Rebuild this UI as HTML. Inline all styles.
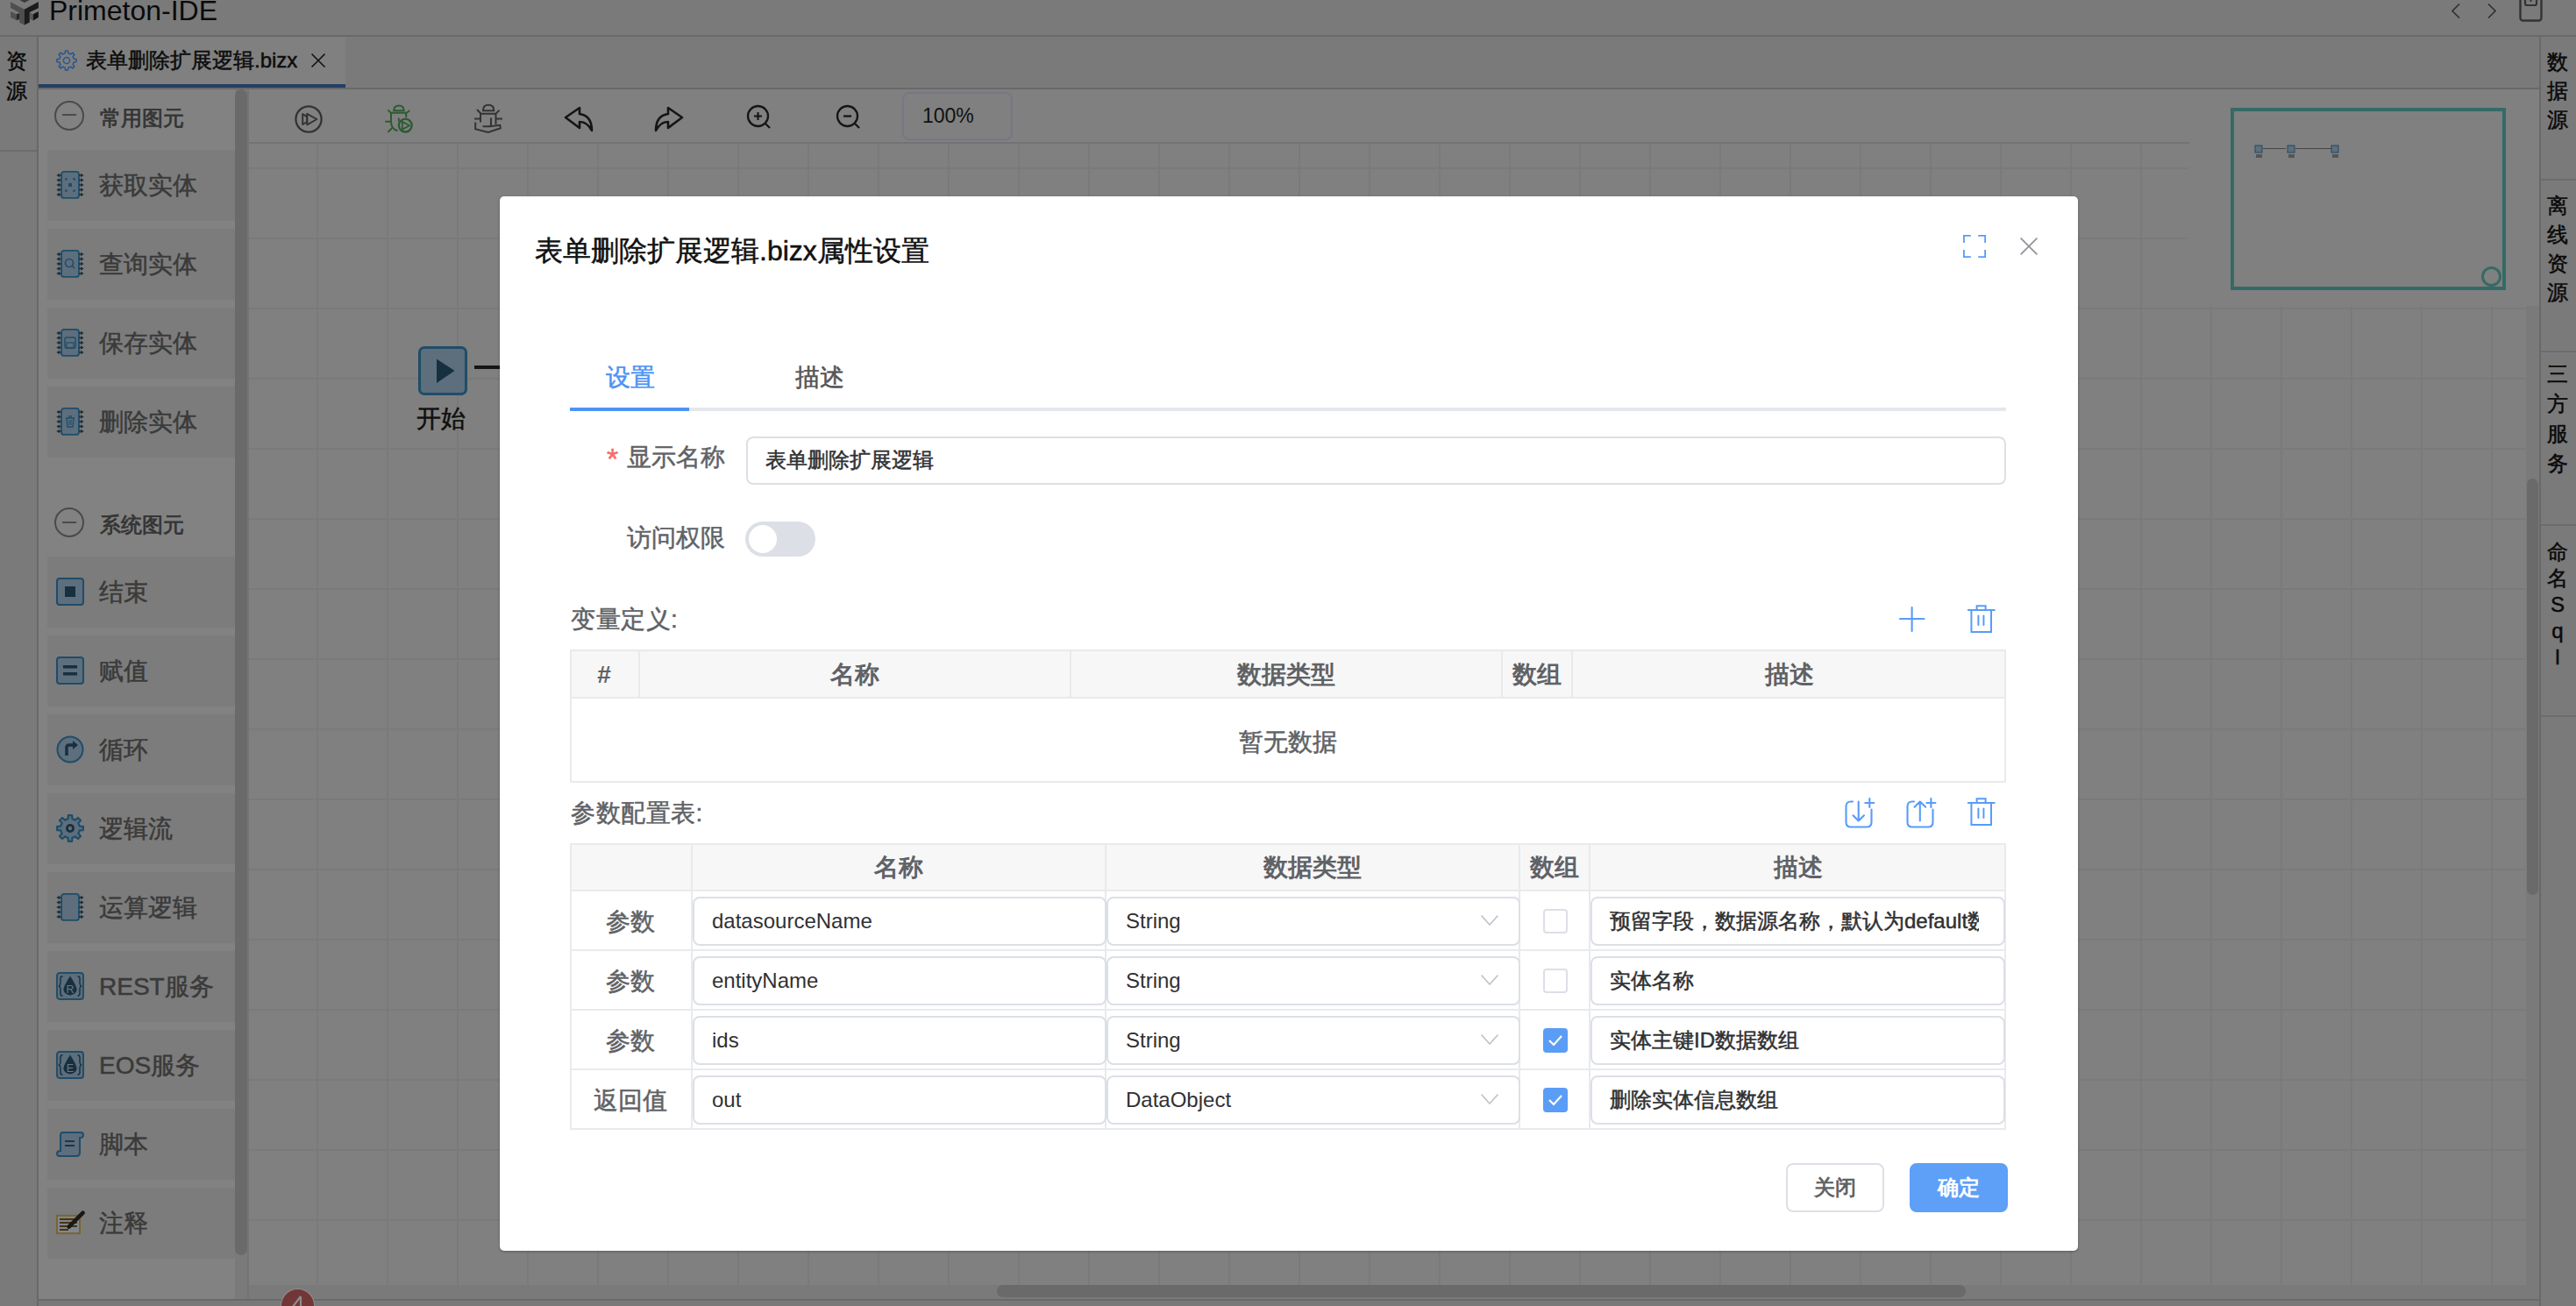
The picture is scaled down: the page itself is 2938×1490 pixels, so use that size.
<!DOCTYPE html>
<html><head><meta charset="utf-8">
<style>
*{box-sizing:border-box;margin:0;padding:0}
html,body{width:2938px;height:1490px;overflow:hidden;background:#808080;font-family:"Liberation Sans",sans-serif;position:relative}
.a{position:absolute}
.t{position:absolute;white-space:nowrap;line-height:1;-webkit-text-stroke:0.5px currentColor}
.v{position:absolute;white-space:normal;line-height:1;color:#0a0a0a;-webkit-text-stroke:0.5px currentColor}
.ns{-webkit-text-stroke:0}
svg{position:absolute;overflow:visible}
</style></head><body>
<!-- title bar -->
<div class="a" style="left:0;top:0;width:2938px;height:40px;background:#7a7a7a"></div>
<div class="a" style="left:0;top:40px;width:2938px;height:2px;background:#696969"></div>
<svg style="left:0;top:0" width="50" height="35" viewBox="0 0 50 35">
  <polygon points="22.4,0 27.8,2.9 33.7,0" fill="#3a3a3a"/>
  <polygon points="12.1,2.3 27.8,10.7 27.8,28.5 22.1,25.5 22.1,14.5 12.1,9.1" fill="#4f4f4f"/>
  <polygon points="27.8,10.7 43.9,2 43.9,9.2 33.8,13.9 33.8,25.5 27.8,28.5" fill="#1c1c1c"/>
  <polygon points="12.1,13.1 18.9,16.3 18.9,23.3 12.1,19.8" fill="#505050"/>
  <polygon points="18.9,16.3 22.1,14.9 22.1,21.7 18.9,23.3" fill="#262626"/>
  <polygon points="33.8,14.3 37.8,16.3 37.8,23.6 33.8,21.8" fill="#5a5a5a"/>
  <polygon points="37.8,16.3 43.9,13.1 43.9,19.8 37.8,23.6" fill="#141414"/>
</svg>
<div class="t ns" style="left:56px;top:-4px;font-size:32px;color:#0a0a0a">Primeton-IDE</div>
<svg style="left:2796px;top:4px" width="10" height="17" viewBox="0 0 10 17"><path d="M9 0.5 L1 8.5 L9 16.5" fill="none" stroke="#2e2e2e" stroke-width="1.6"/></svg>
<svg style="left:2837px;top:4px" width="10" height="17" viewBox="0 0 10 17"><path d="M1 0.5 L9 8.5 L1 16.5" fill="none" stroke="#2e2e2e" stroke-width="1.6"/></svg>
<svg style="left:2873px;top:-6px" width="27" height="31" viewBox="0 0 27 31"><rect x="1.5" y="1.5" width="24" height="28" rx="3" fill="none" stroke="#333" stroke-width="2.4"/><path d="M7 1.5 V10 Q7 12 9 12 H18 Q20 12 20 10 V1.5" fill="none" stroke="#333" stroke-width="2.2"/><line x1="13.5" y1="4" x2="13.5" y2="8" stroke="#333" stroke-width="2"/></svg>
<!-- left strip -->
<div class="a" style="left:0;top:42px;width:42px;height:1448px;background:#7a7a7a"></div>
<div class="a" style="left:42px;top:42px;width:2px;height:1448px;background:#686868"></div>
<div class="a" style="left:0;top:171px;width:42px;height:2px;background:#6c6c6c"></div>
<div class="v" style="left:7px;top:53px;font-size:24px;line-height:34px;width:26px">资<br>源</div>
<!-- right strip -->
<div class="a" style="left:2896px;top:42px;width:2px;height:1448px;background:#686868"></div>
<div class="a" style="left:2898px;top:42px;width:40px;height:1448px;background:#7a7a7a"></div>
<div class="a" style="left:2898px;top:204px;width:40px;height:2px;background:#6c6c6c"></div>
<div class="a" style="left:2898px;top:400px;width:40px;height:2px;background:#6c6c6c"></div>
<div class="a" style="left:2898px;top:598px;width:40px;height:2px;background:#6c6c6c"></div>
<div class="a" style="left:2898px;top:816px;width:40px;height:2px;background:#6c6c6c"></div>
<div class="v" style="left:2905px;top:54px;font-size:24px;line-height:33px;width:26px">数<br>据<br>源</div>
<div class="v" style="left:2905px;top:218px;font-size:24px;line-height:33px;width:26px">离<br>线<br>资<br>源</div>
<div class="v" style="left:2905px;top:410px;font-size:24px;line-height:34px;width:26px">三<br>方<br>服<br>务</div>
<div class="v" style="left:2904px;top:615px;font-size:24px;line-height:30px;width:26px;text-align:center">命<br>名<br>S<br>q<br>l</div>
<!-- tab bar -->
<div class="a" style="left:44px;top:42px;width:2852px;height:58px;background:#7a7a7a"></div>
<div class="a" style="left:44px;top:42px;width:350px;height:58px;background:#808080"></div>
<div class="a" style="left:44px;top:96px;width:350px;height:4px;background:#253f63"></div>
<div class="a" style="left:44px;top:100px;width:2852px;height:2px;background:#696969"></div>
<svg style="left:64px;top:57px" width="24" height="24" viewBox="0 0 24 24"><path d="M19.76 8.79 L20.21 10.23 L23.10 10.51 L23.10 13.49 L20.21 13.77 L19.76 15.21 L19.06 16.56 L20.90 18.79 L18.79 20.90 L16.56 19.06 L15.21 19.76 L13.77 20.21 L13.49 23.10 L10.51 23.10 L10.23 20.21 L8.79 19.76 L7.44 19.06 L5.21 20.90 L3.10 18.79 L4.94 16.56 L4.24 15.21 L3.79 13.77 L0.90 13.49 L0.90 10.51 L3.79 10.23 L4.24 8.79 L4.94 7.44 L3.10 5.21 L5.21 3.10 L7.44 4.94 L8.79 4.24 L10.23 3.79 L10.51 0.90 L13.49 0.90 L13.77 3.79 L15.21 4.24 L16.56 4.94 L18.79 3.10 L20.90 5.21 L19.06 7.44 Z" fill="none" stroke="#2a5490" stroke-width="1.5" stroke-linejoin="round"/><circle cx="12" cy="12" r="3.6" fill="none" stroke="#2a5490" stroke-width="1.5"/></svg>
<div class="t" style="left:98px;top:57px;font-size:24px;color:#0d0d0d">表单删除扩展逻辑.bizx</div>
<svg style="left:355px;top:61px" width="16" height="16" viewBox="0 0 16 16"><path d="M0.5 0.5 L15.5 15.5 M15.5 0.5 L0.5 15.5" stroke="#111" stroke-width="1.6"/></svg>
<!-- canvas -->
<div class="a" style="left:284px;top:164px;width:2597px;height:1302px;background-color:#808080;background-image:linear-gradient(to right,#7a7a7a 0,#7a7a7a 2px,transparent 2px),linear-gradient(to bottom,#7a7a7a 0,#7a7a7a 2px,transparent 2px);background-size:80px 80px;background-position:-3px -53px"></div>
<div class="a" style="left:2496px;top:102px;width:400px;height:247px;background:#808080"></div>
<div class="a" style="left:2544px;top:123px;width:314px;height:208px;border:4px solid #356a66"></div>
<div class="a" style="left:2830px;top:304px;width:23px;height:23px;border:3px solid #356a66;border-radius:50%;background:#808080"></div>
<svg style="left:2570px;top:164px" width="100" height="20" viewBox="0 0 100 20"><rect x="2" y="2" width="8" height="8" fill="#5d6e7d" stroke="#1e4b64" stroke-width="1"/><line x1="11" y1="5.5" x2="37" y2="5.5" stroke="#444" stroke-width="1"/><rect x="39" y="2" width="8" height="8" fill="#5d6e7d" stroke="#1e4b64" stroke-width="1"/><line x1="48" y1="5.5" x2="89" y2="5.5" stroke="#444" stroke-width="1"/><rect x="89" y="2" width="8" height="8" fill="#5d6e7d" stroke="#1e4b64" stroke-width="1"/><rect x="3" y="12" width="7" height="4" fill="#555"/><rect x="40" y="12" width="7" height="4" fill="#555"/><rect x="90" y="12" width="7" height="4" fill="#555"/></svg>
<div class="a" style="left:2881px;top:349px;width:15px;height:1133px;background:#7a7a7a"></div>
<div class="a" style="left:2882px;top:546px;width:13px;height:475px;background:#6a6a6a;border-radius:7px"></div>
<div class="a" style="left:284px;top:1466px;width:2597px;height:16px;background:#7a7a7a"></div>
<div class="a" style="left:1137px;top:1466px;width:1105px;height:14px;background:#6a6a6a;border-radius:7px"></div>
<div class="a" style="left:44px;top:1482px;width:2852px;height:2px;background:#696969"></div>
<div class="a" style="left:44px;top:1484px;width:2852px;height:6px;background:#797979"></div>
<div class="a" style="left:321px;top:1471px;width:37px;height:37px;border-radius:50%;background:#733636;box-shadow:0 0 0 1.2px #8a8a8a"></div>
<svg style="left:330px;top:1478px" width="20" height="20" viewBox="0 0 20 20"><path d="M13 1 L3 14 H16 M13 1 V20" fill="none" stroke="#8c8c8c" stroke-width="2.2"/></svg>
<div class="a" style="left:477px;top:395px;width:56px;height:56px;border:3px solid #1f4d68;border-radius:7px;background:#5d6e7d"></div>
<svg style="left:497px;top:409px" width="24" height="30" viewBox="0 0 24 30"><polygon points="1,0.5 21.5,14 1,28" fill="#17303f"/></svg>
<div class="a" style="left:541px;top:417px;width:29px;height:4px;background:#151515"></div>
<div class="t" style="left:475px;top:464px;font-size:28px;color:#0f0f0f">开始</div>
<!-- toolbar -->
<div class="a" style="left:284px;top:102px;width:2212px;height:60px;background:#808080"></div>
<div class="a" style="left:284px;top:162px;width:2213px;height:2px;background:#737373"></div>
<div class="a" style="left:1029px;top:105px;width:126px;height:55px;border:2px solid #767782;border-radius:8px"></div>
<div class="t ns" style="left:1052px;top:121px;font-size:23px;color:#111">100%</div>
<svg style="left:336px;top:120px" width="32" height="32" viewBox="0 0 32 32"><circle cx="16" cy="16" r="14.6" fill="none" stroke="#333" stroke-width="2.3"/><path d="M9.2 10 L14.2 13.3 V19 L9.2 22 Z" fill="none" stroke="#333" stroke-width="2" stroke-linejoin="round"/><path d="M14.2 9.8 L25.4 16 L14.2 22.3 Z" fill="none" stroke="#333" stroke-width="2" stroke-linejoin="round"/></svg>
<svg style="left:439px;top:120px" width="32" height="32" viewBox="0 0 32 32"><g fill="none" stroke="#2d5a30" stroke-width="2"><path d="M10.2 6.3 Q10.2 0.6 15.95 0.6 Q21.7 0.6 21.7 6.3 Z"/><path d="M6.3 8.8 H25 M7 8.8 V19 Q7 27 14.5 29.3 M24.2 8.8 V14 M3.4 5.4 L6.8 8.8 M28.2 6 L24.8 8.8 M0.3 18.7 H6.2 M3.4 30.8 L8 26.2 M15.8 14.4 V18.5"/><circle cx="23.3" cy="23.1" r="7.4" stroke-width="2.3"/><path d="M19.8 18.8 L28 23.2 L19.8 27.6 Z" stroke-width="1.8" stroke-linejoin="round"/></g></svg>
<svg style="left:541px;top:119px" width="32" height="32" viewBox="0 0 32 32"><g fill="none" stroke="#333" stroke-width="2"><path d="M10 7.2 Q10 0.8 16.1 0.8 Q22.2 0.8 22.2 7.2 Z"/><path d="M6.3 10.7 H25.2 M7 10.7 V20.6 M24.5 10.7 V22.9 M3 6 L7.6 10.7 M28.6 6.6 L24.5 10.7 M0 16.5 H6.5 M25 16.5 H32 M1.2 20.6 V28.3 L15.8 32 L29.8 27.3 L29.3 23.8 L17.5 25.3 M9.5 25.3 H17 Q19 25.3 19 22.8 V15.5"/></g></svg>
<svg style="left:644px;top:122px" width="32" height="32" viewBox="0 0 32 32"><path d="M1 12 L17 1 V8 Q31 10 31 27 Q26 17 17 17 V24 Z" fill="none" stroke="#151515" stroke-width="2.6" stroke-linejoin="round"/></svg>
<svg style="left:747px;top:122px" width="32" height="32" viewBox="0 0 32 32"><path d="M31 12 L15 1 V8 Q1 10 1 27 Q6 17 15 17 V24 Z" fill="none" stroke="#151515" stroke-width="2.6" stroke-linejoin="round"/></svg>
<svg style="left:852px;top:120px" width="32" height="32" viewBox="0 0 32 32"><circle cx="12.5" cy="12.5" r="11.5" fill="none" stroke="#151515" stroke-width="2.3"/><line x1="21" y1="21" x2="26" y2="26" stroke="#151515" stroke-width="2.3"/><line x1="8" y1="12.5" x2="17" y2="12.5" stroke="#151515" stroke-width="2.1"/><line x1="12.5" y1="8" x2="12.5" y2="17" stroke="#151515" stroke-width="2.1"/></svg>
<svg style="left:954px;top:120px" width="32" height="32" viewBox="0 0 32 32"><circle cx="12.5" cy="12.5" r="11.5" fill="none" stroke="#151515" stroke-width="2.3"/><line x1="21" y1="21" x2="26" y2="26" stroke="#151515" stroke-width="2.3"/><line x1="8" y1="12.5" x2="17" y2="12.5" stroke="#151515" stroke-width="2.3"/></svg>
<!-- palette -->
<div class="a" style="left:44px;top:102px;width:238px;height:1380px;background:#828282"></div>
<div class="a" style="left:282px;top:102px;width:2px;height:1380px;background:#747474"></div>
<div class="a" style="left:268px;top:102px;width:14px;height:1380px;background:#7a7a7a"></div>
<div class="a" style="left:268px;top:102px;width:14px;height:1330px;background:#6a6a6a;border-radius:7px"></div>
<div class="a" style="left:62px;top:114.5px;width:34px;height:34px;border:2px solid #4a4a4a;border-radius:50%"></div>
<div class="a" style="left:71px;top:130.3px;width:15.5px;height:2px;background:#4a4a4a"></div>
<div class="t" style="left:114px;top:123px;font-size:24px;font-weight:bold;-webkit-text-stroke:0;color:#363636">常用图元</div>
<div class="a" style="left:62px;top:578.8px;width:34px;height:34px;border:2px solid #4a4a4a;border-radius:50%"></div>
<div class="a" style="left:71px;top:594.5999999999999px;width:15.5px;height:2px;background:#4a4a4a"></div>
<div class="t" style="left:114px;top:587px;font-size:24px;font-weight:bold;-webkit-text-stroke:0;color:#363636">系统图元</div>
<div class="a" style="left:54px;top:171px;width:214px;height:81px;background:#7c7c7c"></div>
<svg style="left:64px;top:195px" width="32" height="32" viewBox="0 0 32 32"><rect x="6" y="0.9" width="20" height="30" rx="3" fill="#5d6e7d" stroke="#1f4d68" stroke-width="1.8"/><path d="M0.3 5 L4 2.7 L4 7.3Z M3.5 4.2 H6 V5.8 H3.5Z" fill="#17303f"/><path d="M31.7 5 L28 2.7 L28 7.3Z M28.5 4.2 H26 V5.8 H28.5Z" fill="#17303f"/><path d="M0.3 10.5 L4 8.2 L4 12.8Z M3.5 9.7 H6 V11.3 H3.5Z" fill="#17303f"/><path d="M31.7 10.5 L28 8.2 L28 12.8Z M28.5 9.7 H26 V11.3 H28.5Z" fill="#17303f"/><path d="M0.3 16 L4 13.7 L4 18.3Z M3.5 15.2 H6 V16.8 H3.5Z" fill="#17303f"/><path d="M31.7 16 L28 13.7 L28 18.3Z M28.5 15.2 H26 V16.8 H28.5Z" fill="#17303f"/><path d="M0.3 21.5 L4 19.2 L4 23.8Z M3.5 20.7 H6 V22.3 H3.5Z" fill="#17303f"/><path d="M31.7 21.5 L28 19.2 L28 23.8Z M28.5 20.7 H26 V22.3 H28.5Z" fill="#17303f"/><path d="M0.3 27 L4 24.7 L4 29.3Z M3.5 26.2 H6 V27.8 H3.5Z" fill="#17303f"/><path d="M31.7 27 L28 24.7 L28 29.3Z M28.5 26.2 H26 V27.8 H28.5Z" fill="#17303f"/><path d="M11 11 V9 H13 M19 9 H21 V11 M21 21 V23 H19 M13 23 H11 V21" fill="none" stroke="#1f4d68" stroke-width="1.4"/><rect x="14" y="14" width="4" height="4" fill="#1f4d68"/></svg>
<div class="t" style="left:113px;top:198px;font-size:28px;color:#3a3a3a">获取实体</div>
<div class="a" style="left:54px;top:261px;width:214px;height:81px;background:#7c7c7c"></div>
<svg style="left:64px;top:285px" width="32" height="32" viewBox="0 0 32 32"><rect x="6" y="0.9" width="20" height="30" rx="3" fill="#5d6e7d" stroke="#1f4d68" stroke-width="1.8"/><path d="M0.3 5 L4 2.7 L4 7.3Z M3.5 4.2 H6 V5.8 H3.5Z" fill="#17303f"/><path d="M31.7 5 L28 2.7 L28 7.3Z M28.5 4.2 H26 V5.8 H28.5Z" fill="#17303f"/><path d="M0.3 10.5 L4 8.2 L4 12.8Z M3.5 9.7 H6 V11.3 H3.5Z" fill="#17303f"/><path d="M31.7 10.5 L28 8.2 L28 12.8Z M28.5 9.7 H26 V11.3 H28.5Z" fill="#17303f"/><path d="M0.3 16 L4 13.7 L4 18.3Z M3.5 15.2 H6 V16.8 H3.5Z" fill="#17303f"/><path d="M31.7 16 L28 13.7 L28 18.3Z M28.5 15.2 H26 V16.8 H28.5Z" fill="#17303f"/><path d="M0.3 21.5 L4 19.2 L4 23.8Z M3.5 20.7 H6 V22.3 H3.5Z" fill="#17303f"/><path d="M31.7 21.5 L28 19.2 L28 23.8Z M28.5 20.7 H26 V22.3 H28.5Z" fill="#17303f"/><path d="M0.3 27 L4 24.7 L4 29.3Z M3.5 26.2 H6 V27.8 H3.5Z" fill="#17303f"/><path d="M31.7 27 L28 24.7 L28 29.3Z M28.5 26.2 H26 V27.8 H28.5Z" fill="#17303f"/><circle cx="15" cy="15" r="4.5" fill="none" stroke="#1f4d68" stroke-width="1.6"/><line x1="18" y1="18" x2="21" y2="21" stroke="#1f4d68" stroke-width="1.6"/></svg>
<div class="t" style="left:113px;top:288px;font-size:28px;color:#3a3a3a">查询实体</div>
<div class="a" style="left:54px;top:351px;width:214px;height:81px;background:#7c7c7c"></div>
<svg style="left:64px;top:375px" width="32" height="32" viewBox="0 0 32 32"><rect x="6" y="0.9" width="20" height="30" rx="3" fill="#5d6e7d" stroke="#1f4d68" stroke-width="1.8"/><path d="M0.3 5 L4 2.7 L4 7.3Z M3.5 4.2 H6 V5.8 H3.5Z" fill="#17303f"/><path d="M31.7 5 L28 2.7 L28 7.3Z M28.5 4.2 H26 V5.8 H28.5Z" fill="#17303f"/><path d="M0.3 10.5 L4 8.2 L4 12.8Z M3.5 9.7 H6 V11.3 H3.5Z" fill="#17303f"/><path d="M31.7 10.5 L28 8.2 L28 12.8Z M28.5 9.7 H26 V11.3 H28.5Z" fill="#17303f"/><path d="M0.3 16 L4 13.7 L4 18.3Z M3.5 15.2 H6 V16.8 H3.5Z" fill="#17303f"/><path d="M31.7 16 L28 13.7 L28 18.3Z M28.5 15.2 H26 V16.8 H28.5Z" fill="#17303f"/><path d="M0.3 21.5 L4 19.2 L4 23.8Z M3.5 20.7 H6 V22.3 H3.5Z" fill="#17303f"/><path d="M31.7 21.5 L28 19.2 L28 23.8Z M28.5 20.7 H26 V22.3 H28.5Z" fill="#17303f"/><path d="M0.3 27 L4 24.7 L4 29.3Z M3.5 26.2 H6 V27.8 H3.5Z" fill="#17303f"/><path d="M31.7 27 L28 24.7 L28 29.3Z M28.5 26.2 H26 V27.8 H28.5Z" fill="#17303f"/><rect x="10" y="10" width="12" height="12" rx="1.5" fill="none" stroke="#1f4d68" stroke-width="1.4"/><rect x="12" y="16" width="8" height="6" fill="none" stroke="#1f4d68" stroke-width="1.2"/></svg>
<div class="t" style="left:113px;top:378px;font-size:28px;color:#3a3a3a">保存实体</div>
<div class="a" style="left:54px;top:441px;width:214px;height:81px;background:#7c7c7c"></div>
<svg style="left:64px;top:465px" width="32" height="32" viewBox="0 0 32 32"><rect x="6" y="0.9" width="20" height="30" rx="3" fill="#5d6e7d" stroke="#1f4d68" stroke-width="1.8"/><path d="M0.3 5 L4 2.7 L4 7.3Z M3.5 4.2 H6 V5.8 H3.5Z" fill="#17303f"/><path d="M31.7 5 L28 2.7 L28 7.3Z M28.5 4.2 H26 V5.8 H28.5Z" fill="#17303f"/><path d="M0.3 10.5 L4 8.2 L4 12.8Z M3.5 9.7 H6 V11.3 H3.5Z" fill="#17303f"/><path d="M31.7 10.5 L28 8.2 L28 12.8Z M28.5 9.7 H26 V11.3 H28.5Z" fill="#17303f"/><path d="M0.3 16 L4 13.7 L4 18.3Z M3.5 15.2 H6 V16.8 H3.5Z" fill="#17303f"/><path d="M31.7 16 L28 13.7 L28 18.3Z M28.5 15.2 H26 V16.8 H28.5Z" fill="#17303f"/><path d="M0.3 21.5 L4 19.2 L4 23.8Z M3.5 20.7 H6 V22.3 H3.5Z" fill="#17303f"/><path d="M31.7 21.5 L28 19.2 L28 23.8Z M28.5 20.7 H26 V22.3 H28.5Z" fill="#17303f"/><path d="M0.3 27 L4 24.7 L4 29.3Z M3.5 26.2 H6 V27.8 H3.5Z" fill="#17303f"/><path d="M31.7 27 L28 24.7 L28 29.3Z M28.5 26.2 H26 V27.8 H28.5Z" fill="#17303f"/><path d="M12 12 H20 L19 22 H13 Z M11 12 H21 M14 10 H18" fill="none" stroke="#1f4d68" stroke-width="1.3"/><line x1="15" y1="14" x2="15" y2="20" stroke="#1f4d68" stroke-width="1"/><line x1="17" y1="14" x2="17" y2="20" stroke="#1f4d68" stroke-width="1"/></svg>
<div class="t" style="left:113px;top:468px;font-size:28px;color:#3a3a3a">删除实体</div>
<div class="a" style="left:54px;top:635px;width:214px;height:81px;background:#7c7c7c"></div>
<svg style="left:64px;top:659px" width="32" height="32" viewBox="0 0 32 32"><rect x="1" y="1" width="30" height="30" rx="3" fill="#5d6e7d" stroke="#1f4d68" stroke-width="2"/><rect x="10" y="10" width="12" height="12" fill="#17303f"/></svg>
<div class="t" style="left:113px;top:662px;font-size:28px;color:#3a3a3a">结束</div>
<div class="a" style="left:54px;top:725px;width:214px;height:81px;background:#7c7c7c"></div>
<svg style="left:64px;top:749px" width="32" height="32" viewBox="0 0 32 32"><rect x="1" y="1" width="30" height="30" rx="3" fill="#5d6e7d" stroke="#1f4d68" stroke-width="2"/><rect x="8" y="10" width="16" height="3.5" fill="#17303f"/><rect x="8" y="18" width="16" height="3.5" fill="#17303f"/></svg>
<div class="t" style="left:113px;top:752px;font-size:28px;color:#3a3a3a">赋值</div>
<div class="a" style="left:54px;top:815px;width:214px;height:81px;background:#7c7c7c"></div>
<svg style="left:64px;top:839px" width="32" height="32" viewBox="0 0 32 32"><circle cx="16" cy="16" r="14.5" fill="#5d6e7d" stroke="#1f4d68" stroke-width="2"/><path d="M12 23 V14 Q12 11 15 11 H20" fill="none" stroke="#17303f" stroke-width="3.5"/><polygon points="19,6 25,11 19,16" fill="#17303f"/></svg>
<div class="t" style="left:113px;top:842px;font-size:28px;color:#3a3a3a">循环</div>
<div class="a" style="left:54px;top:905px;width:214px;height:81px;background:#7c7c7c"></div>
<svg style="left:64px;top:929px" width="32" height="32" viewBox="0 0 32 32"><path d="M26.16 11.79 L26.73 13.56 L30.84 13.83 L30.84 18.17 L26.73 18.44 L26.16 20.21 L25.31 21.86 L28.03 24.96 L24.96 28.03 L21.86 25.31 L20.21 26.16 L18.44 26.73 L18.17 30.84 L13.83 30.84 L13.56 26.73 L11.79 26.16 L10.14 25.31 L7.04 28.03 L3.97 24.96 L6.69 21.86 L5.84 20.21 L5.27 18.44 L1.16 18.17 L1.16 13.83 L5.27 13.56 L5.84 11.79 L6.69 10.14 L3.97 7.04 L7.04 3.97 L10.14 6.69 L11.79 5.84 L13.56 5.27 L13.83 1.16 L18.17 1.16 L18.44 5.27 L20.21 5.84 L21.86 6.69 L24.96 3.97 L28.03 7.04 L25.31 10.14 Z" fill="#5d6e7d" stroke="#1f4d68" stroke-width="2.2" stroke-linejoin="round"/><circle cx="16" cy="16" r="5" fill="#17303f"/><circle cx="16" cy="16" r="2.2" fill="#5d6e7d"/></svg>
<div class="t" style="left:113px;top:932px;font-size:28px;color:#3a3a3a">逻辑流</div>
<div class="a" style="left:54px;top:995px;width:214px;height:81px;background:#7c7c7c"></div>
<svg style="left:64px;top:1019px" width="32" height="32" viewBox="0 0 32 32"><rect x="6" y="0.9" width="20" height="30" rx="3" fill="#5d6e7d" stroke="#1f4d68" stroke-width="1.8"/><path d="M0.3 5 L4 2.7 L4 7.3Z M3.5 4.2 H6 V5.8 H3.5Z" fill="#17303f"/><path d="M31.7 5 L28 2.7 L28 7.3Z M28.5 4.2 H26 V5.8 H28.5Z" fill="#17303f"/><path d="M0.3 10.5 L4 8.2 L4 12.8Z M3.5 9.7 H6 V11.3 H3.5Z" fill="#17303f"/><path d="M31.7 10.5 L28 8.2 L28 12.8Z M28.5 9.7 H26 V11.3 H28.5Z" fill="#17303f"/><path d="M0.3 16 L4 13.7 L4 18.3Z M3.5 15.2 H6 V16.8 H3.5Z" fill="#17303f"/><path d="M31.7 16 L28 13.7 L28 18.3Z M28.5 15.2 H26 V16.8 H28.5Z" fill="#17303f"/><path d="M0.3 21.5 L4 19.2 L4 23.8Z M3.5 20.7 H6 V22.3 H3.5Z" fill="#17303f"/><path d="M31.7 21.5 L28 19.2 L28 23.8Z M28.5 20.7 H26 V22.3 H28.5Z" fill="#17303f"/><path d="M0.3 27 L4 24.7 L4 29.3Z M3.5 26.2 H6 V27.8 H3.5Z" fill="#17303f"/><path d="M31.7 27 L28 24.7 L28 29.3Z M28.5 26.2 H26 V27.8 H28.5Z" fill="#17303f"/></svg>
<div class="t" style="left:113px;top:1022px;font-size:28px;color:#3a3a3a">运算逻辑</div>
<div class="a" style="left:54px;top:1085px;width:214px;height:81px;background:#7c7c7c"></div>
<svg style="left:64px;top:1109px" width="32" height="32" viewBox="0 0 32 32"><rect x="1" y="1" width="30" height="30" rx="3" fill="#5d6e7d" stroke="#1f4d68" stroke-width="1.9"/><path d="M7.5 4.8 Q5 4.8 5 7.5 V13 Q5 15.5 3 16 Q5 16.5 5 19 V24.5 Q5 27.2 7.5 27.2 M24.5 4.8 Q27 4.8 27 7.5 V13 Q27 15.5 29 16 Q27 16.5 27 19 V24.5 Q27 27.2 24.5 27.2" fill="none" stroke="#17303f" stroke-width="1.4"/><path d="M16 4.4 Q9 15 8.3 20 A7.8 7.6 0 0 0 23.7 20 Q23 15 16 4.4Z" fill="#17303f"/><text x="16" y="24" font-size="12.5" text-anchor="middle" fill="#6a7885" font-family="Liberation Sans">R</text></svg>
<div class="t" style="left:113px;top:1112px;font-size:28px;color:#3a3a3a">REST服务</div>
<div class="a" style="left:54px;top:1175px;width:214px;height:81px;background:#7c7c7c"></div>
<svg style="left:64px;top:1199px" width="32" height="32" viewBox="0 0 32 32"><rect x="1" y="1" width="30" height="30" rx="3" fill="#5d6e7d" stroke="#1f4d68" stroke-width="1.9"/><path d="M7.5 4.8 Q5 4.8 5 7.5 V13 Q5 15.5 3 16 Q5 16.5 5 19 V24.5 Q5 27.2 7.5 27.2 M24.5 4.8 Q27 4.8 27 7.5 V13 Q27 15.5 29 16 Q27 16.5 27 19 V24.5 Q27 27.2 24.5 27.2" fill="none" stroke="#17303f" stroke-width="1.4"/><path d="M16 4.4 Q9 15 8.3 20 A7.8 7.6 0 0 0 23.7 20 Q23 15 16 4.4Z" fill="#17303f"/><text x="16" y="24" font-size="12.5" text-anchor="middle" fill="#6a7885" font-family="Liberation Sans">E</text></svg>
<div class="t" style="left:113px;top:1202px;font-size:28px;color:#3a3a3a">EOS服务</div>
<div class="a" style="left:54px;top:1265px;width:214px;height:81px;background:#7c7c7c"></div>
<svg style="left:64px;top:1289px" width="32" height="32" viewBox="0 0 32 32"><path d="M6 3 H28 Q31 3 31 6 Q31 9 27 9 V26 Q27 30 23 30 H4 Q1 30 1 27 Q1 24 5 24 V6 Q5 3 8 3Z" fill="#5d6e7d" stroke="#1f4d68" stroke-width="2"/><line x1="10" y1="13" x2="21" y2="13" stroke="#17303f" stroke-width="1.8"/><line x1="10" y1="18" x2="21" y2="18" stroke="#17303f" stroke-width="1.8"/></svg>
<div class="t" style="left:113px;top:1292px;font-size:28px;color:#3a3a3a">脚本</div>
<div class="a" style="left:54px;top:1355px;width:214px;height:81px;background:#7c7c7c"></div>
<svg style="left:64px;top:1379px" width="32" height="32" viewBox="0 0 32 32"><rect x="1" y="7.9" width="26" height="20.2" fill="#828690" stroke="#7a6530" stroke-width="2"/><path d="M4 12 H24 M4 16 H24 M4 20 H24 M4 24 H14" stroke="#4a3510" stroke-width="1.8"/><path d="M14.6 20.6 L30.6 4.6" stroke="#1a1a14" stroke-width="4.6" stroke-linecap="round"/><path d="M13.4 21.8 L15.6 19.6" stroke="#1a1a14" stroke-width="2"/></svg>
<div class="t" style="left:113px;top:1382px;font-size:28px;color:#3a3a3a">注释</div>
<!-- modal -->
<div class="a" style="left:570px;top:224px;width:1800px;height:1203px;background:#fff;border-radius:5px;box-shadow:0 1px 3px rgba(0,0,0,0.3)"></div>
<div class="t" style="left:610px;top:270px;font-size:32px;color:#111">表单删除扩展逻辑.bizx属性设置</div>
<svg style="left:2239px;top:268px" width="26" height="26" viewBox="0 0 26 26"><path d="M0.9 9 V0.9 H8.8 M17.2 0.9 H25.1 V9 M25.1 17 V25.1 H17.2 M8.8 25.1 H0.9 V17" fill="none" stroke="#589cf7" stroke-width="1.8"/></svg>
<svg style="left:2304px;top:271px" width="20" height="20" viewBox="0 0 20 20"><path d="M0.6 0.6 L19.4 19.4 M19.4 0.6 L0.6 19.4" stroke="#909399" stroke-width="1.7"/></svg>
<div class="t" style="left:691px;top:417px;font-size:28px;color:#4d93f4">设置</div>
<div class="t" style="left:907px;top:417px;font-size:28px;color:#555">描述</div>
<div class="a" style="left:650px;top:465px;width:1638px;height:4px;background:#e4e7ed"></div>
<div class="a" style="left:650px;top:465px;width:136px;height:4px;background:#4d93f4"></div>
<div class="t" style="left:692px;top:506px;font-size:34px;color:#f56c6c">*</div>
<div class="t" style="left:715px;top:508px;font-size:28px;color:#606266">显示名称</div>
<div class="a" style="left:851px;top:498px;width:1437px;height:55px;border:2px solid #dcdfe6;border-radius:8px"></div>
<div class="t" style="left:873px;top:513px;font-size:24px;color:#303133">表单删除扩展逻辑</div>
<div class="t" style="left:715px;top:600px;font-size:28px;color:#606266">访问权限</div>
<div class="a" style="left:850px;top:595px;width:80px;height:40px;background:#dcdfe6;border-radius:20px"></div>
<div class="a" style="left:854px;top:599px;width:32px;height:32px;background:#fff;border-radius:50%"></div>
<div class="t" style="left:651px;top:693px;font-size:28px;color:#606266;letter-spacing:0.5px">变量定义:</div>
<svg style="left:2166px;top:692px" width="30" height="30" viewBox="0 0 30 30"><path d="M14.6 1 V28 M1 14 H28.5" stroke="#589cf7" stroke-width="2.1" stroke-linecap="round"/></svg>
<svg style="left:2244px;top:690px" width="32" height="32" viewBox="0 0 32 32"><path d="M0.8 6 H30.8 M10.6 6 V1.2 H20.6 V6 M4.4 6 V31 H27 V6 M12.4 12.5 V23 M18.4 12.5 V23" fill="none" stroke="#589cf7" stroke-width="2" stroke-linecap="round"/></svg>
<div class="a" style="left:650px;top:741px;width:1638px;height:152px;border:2px solid #e8eaed"></div>
<div class="a" style="left:652px;top:743px;width:1634px;height:52px;background:#f7f7f7"></div>
<div class="a" style="left:652px;top:795px;width:1634px;height:2px;background:#e8eaed"></div>
<div class="a" style="left:728px;top:743px;width:2px;height:52px;background:#e8eaed"></div>
<div class="a" style="left:1220px;top:743px;width:2px;height:52px;background:#e8eaed"></div>
<div class="a" style="left:1712px;top:743px;width:2px;height:52px;background:#e8eaed"></div>
<div class="a" style="left:1792px;top:743px;width:2px;height:52px;background:#e8eaed"></div>
<div class="t" style="left:650px;top:756px;width:78px;text-align:center;font-size:28px;font-weight:bold;-webkit-text-stroke:0;color:#606266">#</div>
<div class="t" style="left:730px;top:756px;width:490px;text-align:center;font-size:28px;font-weight:bold;-webkit-text-stroke:0;color:#606266">名称</div>
<div class="t" style="left:1222px;top:756px;width:490px;text-align:center;font-size:28px;font-weight:bold;-webkit-text-stroke:0;color:#606266">数据类型</div>
<div class="t" style="left:1714px;top:756px;width:78px;text-align:center;font-size:28px;font-weight:bold;-webkit-text-stroke:0;color:#606266">数组</div>
<div class="t" style="left:1794px;top:756px;width:494px;text-align:center;font-size:28px;font-weight:bold;-webkit-text-stroke:0;color:#606266">描述</div>
<div class="t" style="left:650px;top:833px;width:1638px;text-align:center;font-size:28px;color:#606266">暂无数据</div>
<div class="t" style="left:651px;top:914px;font-size:28px;color:#606266;letter-spacing:0.5px">参数配置表:</div>
<svg style="left:2103px;top:910px" width="36" height="36" viewBox="0 0 36 36"><path d="M10 4.5 H8 Q2.5 4.5 2.5 10 V28 Q2.5 33.5 8 33.5 H26 Q31.5 33.5 31.5 28 V13.5 M16.7 4.5 V26.5 M10.5 20.3 L16.7 26.5 L23 20.3 M29.3 1 V11 M24.3 6 H34.3" fill="none" stroke="#589cf7" stroke-width="2.1" stroke-linecap="round" stroke-linejoin="round"/></svg>
<svg style="left:2173px;top:910px" width="36" height="36" viewBox="0 0 36 36"><path d="M10 4.5 H8 Q2.5 4.5 2.5 10 V28 Q2.5 33.5 8 33.5 H26 Q31.5 33.5 31.5 28 V13.5 M16.8 26.5 V4.5 M10.5 10.8 L16.8 4.5 L23.2 10.8 M29.4 1 V11 M24.4 6 H34.4" fill="none" stroke="#589cf7" stroke-width="2.1" stroke-linecap="round" stroke-linejoin="round"/></svg>
<svg style="left:2244px;top:910px" width="32" height="32" viewBox="0 0 32 32"><path d="M0.8 6 H30.8 M10.6 6 V1.2 H20.6 V6 M4.4 6 V31 H27 V6 M12.4 12.5 V23 M18.4 12.5 V23" fill="none" stroke="#589cf7" stroke-width="2" stroke-linecap="round"/></svg>
<div class="a" style="left:650px;top:962px;width:1638px;height:327px;border:2px solid #e8eaed"></div>
<div class="a" style="left:652px;top:964px;width:1634px;height:51px;background:#f7f7f7"></div>
<div class="a" style="left:652px;top:1015px;width:1634px;height:2px;background:#e8eaed"></div>
<div class="a" style="left:652px;top:1083px;width:1634px;height:2px;background:#e8eaed"></div>
<div class="a" style="left:652px;top:1151px;width:1634px;height:2px;background:#e8eaed"></div>
<div class="a" style="left:652px;top:1219px;width:1634px;height:2px;background:#e8eaed"></div>
<div class="a" style="left:788px;top:964px;width:2px;height:323px;background:#e8eaed"></div>
<div class="a" style="left:1260px;top:964px;width:2px;height:323px;background:#e8eaed"></div>
<div class="a" style="left:1732px;top:964px;width:2px;height:323px;background:#e8eaed"></div>
<div class="a" style="left:1812px;top:964px;width:2px;height:323px;background:#e8eaed"></div>
<div class="t" style="left:790px;top:976px;width:470px;text-align:center;font-size:28px;font-weight:bold;-webkit-text-stroke:0;color:#606266">名称</div>
<div class="t" style="left:1262px;top:976px;width:470px;text-align:center;font-size:28px;font-weight:bold;-webkit-text-stroke:0;color:#606266">数据类型</div>
<div class="t" style="left:1734px;top:976px;width:78px;text-align:center;font-size:28px;font-weight:bold;-webkit-text-stroke:0;color:#606266">数组</div>
<div class="t" style="left:1814px;top:976px;width:474px;text-align:center;font-size:28px;font-weight:bold;-webkit-text-stroke:0;color:#606266">描述</div>
<div class="t" style="left:650px;top:1038px;width:138px;text-align:center;font-size:28px;color:#606266">参数</div>
<div class="a" style="left:790px;top:1023px;width:472px;height:56px;border:2px solid #dcdfe6;border-radius:8px"></div>
<div class="t ns" style="left:812px;top:1039px;font-size:24px;color:#303133">datasourceName</div>
<div class="a" style="left:1262px;top:1023px;width:472px;height:56px;border:2px solid #dcdfe6;border-radius:8px"></div>
<div class="t ns" style="left:1284px;top:1039px;font-size:24px;color:#303133">String</div>
<svg style="left:1689px;top:1044px" width="20" height="12" viewBox="0 0 20 12"><path d="M0.6 0.6 L10 11 L19.4 0.6" fill="none" stroke="#c0c4cc" stroke-width="1.6"/></svg>
<div class="a" style="left:1760px;top:1037px;width:28px;height:28px;border:2px solid #dcdfe6;border-radius:4px;background:#fff"></div>
<div class="a" style="left:1814px;top:1023px;width:473px;height:56px;border:2px solid #dcdfe6;border-radius:8px;overflow:hidden"><div class="t" style="left:20px;top:14px;font-size:24px;color:#303133;width:421px;overflow:hidden">预留字段，数据源名称，默认为default数据源</div></div>
<div class="t" style="left:650px;top:1106px;width:138px;text-align:center;font-size:28px;color:#606266">参数</div>
<div class="a" style="left:790px;top:1091px;width:472px;height:56px;border:2px solid #dcdfe6;border-radius:8px"></div>
<div class="t ns" style="left:812px;top:1107px;font-size:24px;color:#303133">entityName</div>
<div class="a" style="left:1262px;top:1091px;width:472px;height:56px;border:2px solid #dcdfe6;border-radius:8px"></div>
<div class="t ns" style="left:1284px;top:1107px;font-size:24px;color:#303133">String</div>
<svg style="left:1689px;top:1112px" width="20" height="12" viewBox="0 0 20 12"><path d="M0.6 0.6 L10 11 L19.4 0.6" fill="none" stroke="#c0c4cc" stroke-width="1.6"/></svg>
<div class="a" style="left:1760px;top:1105px;width:28px;height:28px;border:2px solid #dcdfe6;border-radius:4px;background:#fff"></div>
<div class="a" style="left:1814px;top:1091px;width:473px;height:56px;border:2px solid #dcdfe6;border-radius:8px;overflow:hidden"><div class="t" style="left:20px;top:14px;font-size:24px;color:#303133;width:421px;overflow:hidden">实体名称</div></div>
<div class="t" style="left:650px;top:1174px;width:138px;text-align:center;font-size:28px;color:#606266">参数</div>
<div class="a" style="left:790px;top:1159px;width:472px;height:56px;border:2px solid #dcdfe6;border-radius:8px"></div>
<div class="t ns" style="left:812px;top:1175px;font-size:24px;color:#303133">ids</div>
<div class="a" style="left:1262px;top:1159px;width:472px;height:56px;border:2px solid #dcdfe6;border-radius:8px"></div>
<div class="t ns" style="left:1284px;top:1175px;font-size:24px;color:#303133">String</div>
<svg style="left:1689px;top:1180px" width="20" height="12" viewBox="0 0 20 12"><path d="M0.6 0.6 L10 11 L19.4 0.6" fill="none" stroke="#c0c4cc" stroke-width="1.6"/></svg>
<div class="a" style="left:1760px;top:1173px;width:28px;height:28px;background:#5a9df7;border-radius:4px"></div>
<svg style="left:1765px;top:1180px" width="18" height="14" viewBox="0 0 18 14"><path d="M2 7 L7 12 L16 2" fill="none" stroke="#fff" stroke-width="2.2"/></svg>
<div class="a" style="left:1814px;top:1159px;width:473px;height:56px;border:2px solid #dcdfe6;border-radius:8px;overflow:hidden"><div class="t" style="left:20px;top:14px;font-size:24px;color:#303133;width:421px;overflow:hidden">实体主键ID数据数组</div></div>
<div class="t" style="left:650px;top:1242px;width:138px;text-align:center;font-size:28px;color:#606266">返回值</div>
<div class="a" style="left:790px;top:1227px;width:472px;height:56px;border:2px solid #dcdfe6;border-radius:8px"></div>
<div class="t ns" style="left:812px;top:1243px;font-size:24px;color:#303133">out</div>
<div class="a" style="left:1262px;top:1227px;width:472px;height:56px;border:2px solid #dcdfe6;border-radius:8px"></div>
<div class="t ns" style="left:1284px;top:1243px;font-size:24px;color:#303133">DataObject</div>
<svg style="left:1689px;top:1248px" width="20" height="12" viewBox="0 0 20 12"><path d="M0.6 0.6 L10 11 L19.4 0.6" fill="none" stroke="#c0c4cc" stroke-width="1.6"/></svg>
<div class="a" style="left:1760px;top:1241px;width:28px;height:28px;background:#5a9df7;border-radius:4px"></div>
<svg style="left:1765px;top:1248px" width="18" height="14" viewBox="0 0 18 14"><path d="M2 7 L7 12 L16 2" fill="none" stroke="#fff" stroke-width="2.2"/></svg>
<div class="a" style="left:1814px;top:1227px;width:473px;height:56px;border:2px solid #dcdfe6;border-radius:8px;overflow:hidden"><div class="t" style="left:20px;top:14px;font-size:24px;color:#303133;width:421px;overflow:hidden">删除实体信息数组</div></div>
<div class="a" style="left:2037px;top:1327px;width:112px;height:56px;border:2px solid #dcdfe6;border-radius:8px;background:#fff"></div>
<div class="t" style="left:2037px;top:1343px;width:112px;text-align:center;font-size:24px;font-weight:bold;-webkit-text-stroke:0;color:#606266">关闭</div>
<div class="a" style="left:2178px;top:1327px;width:112px;height:56px;border-radius:8px;background:#5e9ff8"></div>
<div class="t" style="left:2178px;top:1343px;width:112px;text-align:center;font-size:24px;font-weight:bold;-webkit-text-stroke:0;color:#fff">确定</div>
</body></html>
